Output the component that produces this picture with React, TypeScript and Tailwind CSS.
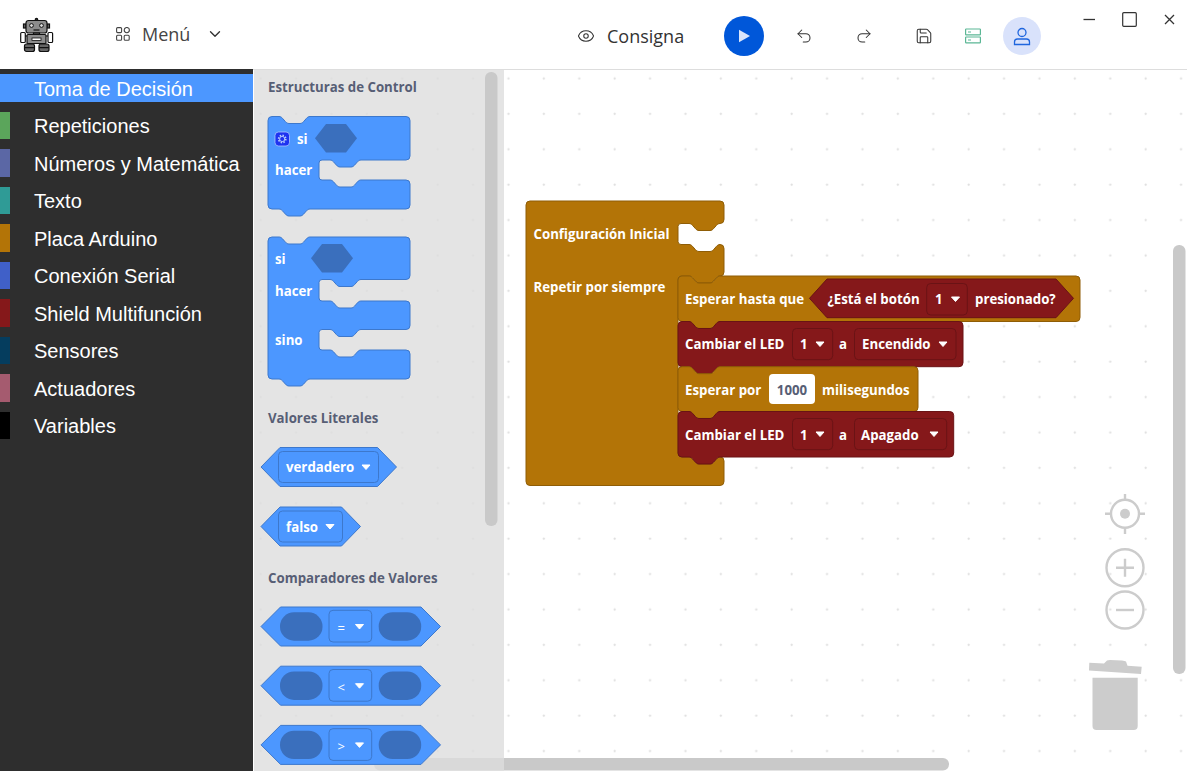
import { Eye, ChevronDown, Undo2, Redo2, Save } from "lucide-react";

const BLUE = { f: "#4c97ff", s: "#3d78cc", d: "#3a6fbd" };
const GOLD = { f: "#b37407", s: "#8f5d06" };
const RED = { f: "#85181a", s: "#6a1315" };

const notchR = "c1.5 0 2.5 .7 3.5 1.8 l3 3.4 c1 1.1 2 1.8 3.5 1.8 h11 c1.5 0 2.5 -.7 3.5 -1.8 l3 -3.4 c1 -1.1 2 -1.8 3.5 -1.8";
const notchL = "c-1.5 0 -2.5 .7 -3.5 1.8 l-3 3.4 c-1 1.1 -2 1.8 -3.5 1.8 h-11 c-1.5 0 -2.5 -.7 -3.5 -1.8 l-3 -3.4 c-1 -1.1 -2 -1.8 -3.5 -1.8";
const NW = 31;
const O = 11;
const R = 4;

type Gap = [number, number];
function blockPath(o: {
  x: number; y: number; right: number; bottom: number; top?: boolean; foot?: boolean; inner?: number; gaps?: Gap[];
}) {
  const { x, y, right, bottom, top = true, foot = true, inner = 0, gaps = [] } = o;
  let d = `M${x} ${y + R} q0 -${R} ${R} -${R} `;
  if (top) d += `H${x + O} ${notchR} `;
  d += `H${right - R} q${R} 0 ${R} ${R} `;
  for (const [a, b] of gaps) {
    d += `V${a - R} q0 ${R} -${R} ${R} H${inner + O + NW} ${notchL} H${inner + 3} q-3 0 -3 3 V${b - 3} q0 3 3 3 H${inner + O} ${notchR} H${right - R} q${R} 0 ${R} ${R} `;
  }
  d += `V${bottom - R} q0 ${R} -${R} ${R} `;
  if (foot) d += `H${x + O + NW} ${notchL} `;
  d += `H${x + R} q-${R} 0 -${R} -${R} Z`;
  return d;
}

function Block({ c, ...o }: { c: { f: string; s: string } } & Parameters<typeof blockPath>[0]) {
  return <path d={blockPath(o)} fill={c.f} stroke={c.s} strokeWidth={1} />;
}

function Hex({ x, y, w, h, tab, fill, stroke }: { x: number; y: number; w: number; h: number; tab: number; fill: string; stroke?: string }) {
  const m = y + h / 2;
  return (
    <path
      d={`M${x} ${m} L${x + tab} ${y} H${x + w - tab} L${x + w} ${m} L${x + w - tab} ${y + h} H${x + tab} Z`}
      fill={fill}
      stroke={stroke}
      strokeWidth={stroke ? 1 : 0}
      strokeLinejoin="round"
    />
  );
}

function Lbl({ x, y, children, fill = "#ffffff" }: { x: number; y: number; children: React.ReactNode; fill?: string }) {
  return (
    <text x={x} y={y} fill={fill} fontSize={13.25} fontWeight={700}>
      {children}
    </text>
  );
}

function Caret({ x, y }: { x: number; y: number }) {
  return <path d={`M${x + 0.5} ${y + 0.5} h8 l-4 4.5 Z`} fill="#ffffff" stroke="#ffffff" strokeWidth={1} strokeLinejoin="round" />;
}

function Drop({ x, y, w, h, label, tx, cx, cy, s, ty }: { x: number; y: number; w: number; h: number; label: string; tx: number; cx: number; cy: number; s: string; ty: number }) {
  return (
    <g>
      <rect x={x} y={y} width={w} height={h} rx={4} fill="none" stroke={s} strokeWidth={1} />
      <Lbl x={tx} y={ty}>{label}</Lbl>
      <Caret x={cx} y={cy} />
    </g>
  );
}

function Gear() {
  return (
    <g>
      <rect x={275} y={132} width={14.5} height={14} rx={3.5} fill="#1e33f0" stroke="#a9c4ff" strokeWidth={0.8} />
      <circle cx={282.2} cy={139} r={3.6} fill="none" stroke="#b7cdfc" strokeWidth={1.6} strokeDasharray="1.5 1.3" />
      <circle cx={282.2} cy={139} r={2.6} fill="none" stroke="#b7cdfc" strokeWidth={1} />
    </g>
  );
}

function Comparator({ y, op }: { y: number; op: string }) {
  return (
    <g>
      <Hex x={261} y={y} w={179.5} h={39} tab={19.5} fill={BLUE.f} stroke={BLUE.s} />
      <rect x={280} y={y + 5.3} width={42.5} height={28.4} rx={14} fill={BLUE.d} />
      <rect x={378.7} y={y + 5.3} width={42.5} height={28.4} rx={14} fill={BLUE.d} />
      <rect x={329} y={y + 3.3} width={42.7} height={31.7} rx={4} fill="none" stroke={BLUE.s} />
      <text x={337.5} y={y + 26} fill="#fff" fontSize={13} fontWeight={400}>{op}</text>
      <Caret x={355} y={y + 17} />
    </g>
  );
}

function Flyout() {
  return (
    <div className="absolute left-px top-0 bottom-0 w-[250px] bg-[#dddddd]/80">
      <svg className="absolute inset-0 font-['Open_Sans',sans-serif]" width="250" height="701" viewBox="254 70 250 701">
        <rect x={485} y={72} width={12.5} height={454} rx={6} fill="#c9c9c9" />
        <Lbl x={268} y={92} fill="#575e75">Estructuras de Control</Lbl>

        <Block c={BLUE} x={268} y={116.5} right={410} bottom={209} inner={319} gaps={[[160, 180]]} />
        <Gear />
        <Lbl x={297} y={144}>si</Lbl>
        <Hex x={315} y={124} w={42} h={28.4} tab={11} fill={BLUE.d} />
        <Lbl x={275} y={175}>hacer</Lbl>

        <Block c={BLUE} x={268} y={237} right={410} bottom={379} inner={319} gaps={[[279.5, 301], [329.5, 350]]} />
        <Lbl x={275} y={264}>si</Lbl>
        <Hex x={311} y={244} w={42} h={28.4} tab={11} fill={BLUE.d} />
        <Lbl x={275} y={296}>hacer</Lbl>
        <Lbl x={275} y={345}>sino</Lbl>

        <Lbl x={268} y={423} fill="#575e75">Valores Literales</Lbl>
        <Hex x={261} y={447.5} w={135.5} h={39} tab={19} fill={BLUE.f} stroke={BLUE.s} />
        <Drop x={278.5} y={451.5} w={100} h={31} label="verdadero" tx={286} ty={472} cx={361.5} cy={464.5} s={BLUE.s} />
        <Hex x={261} y={507} w={99.5} h={39} tab={19} fill={BLUE.f} stroke={BLUE.s} />
        <Drop x={278.5} y={511} w={64} h={31} label="falso" tx={286} ty={532} cx={325.5} cy={524} s={BLUE.s} />

        <Lbl x={268} y={583} fill="#575e75">Comparadores de Valores</Lbl>
        <Comparator y={607} op="=" />
        <Comparator y={666.2} op="<" />
        <Comparator y={725.4} op=">" />
      </svg>
    </div>
  );
}

function Canvas() {
  const grey = "#cccccc";
  return (
    <svg className="absolute inset-0 font-['Open_Sans',sans-serif]" width="934" height="701" viewBox="253 70 934 701">
      <defs>
        <pattern id="dots" x={11.15} y={5.95} width={35.4} height={35.4} patternUnits="userSpaceOnUse">
          <path d="M0.5 1.75 H3 M1.75 0.5 V3" stroke="#dcdcdc" strokeWidth={0.9} />
        </pattern>
      </defs>
      <rect x={253} y={70} width={934} height={701} fill="url(#dots)" />

      {/* program */}
      <Block c={GOLD} x={526} y={201} right={724} bottom={485.5} top={false} foot={false} inner={678} gaps={[[223.5, 244.5], [276, 457]]} />
      <Lbl x={533.5} y={239}>Configuración Inicial</Lbl>
      <Lbl x={533.5} y={292}>Repetir por siempre</Lbl>

      <Block c={GOLD} x={678} y={276} right={1080} bottom={321.5} foot />
      <Lbl x={685} y={304}>Esperar hasta que</Lbl>
      <Hex x={809.5} y={279} w={264} h={38.7} tab={17.5} fill={RED.f} stroke={RED.s} />
      <Lbl x={827.5} y={304}>¿Está el botón</Lbl>
      <Drop x={926.7} y={283.5} w={40.6} h={31.5} label="1" tx={935} ty={304} cx={951} cy={296.5} s={RED.s} />
      <Lbl x={975} y={304}>presionado?</Lbl>

      <Block c={RED} x={678} y={321.5} right={963} bottom={366.7} />
      <Lbl x={685} y={349}>Cambiar el LED</Lbl>
      <Drop x={792.5} y={328.5} w={40.2} h={31.2} label="1" tx={800} ty={349} cx={815.5} cy={341.5} s={RED.s} />
      <Lbl x={839} y={349}>a</Lbl>
      <Drop x={854.5} y={328.5} w={101.5} h={31.2} label="Encendido" tx={862} ty={349} cx={938.5} cy={341.5} s={RED.s} />

      <Block c={GOLD} x={678} y={366.7} right={918} bottom={411.5} />
      <Lbl x={685} y={395}>Esperar por</Lbl>
      <rect x={769} y={374} width={46} height={30} rx={4} fill="#ffffff" />
      <text x={792} y={395} textAnchor="middle" fill="#575e75" fontSize={13.25} fontWeight={700}>1000</text>
      <Lbl x={822} y={395}>milisegundos</Lbl>

      <Block c={RED} x={678} y={411.5} right={953.7} bottom={457} />
      <Lbl x={685} y={440}>Cambiar el LED</Lbl>
      <Drop x={792.5} y={418.5} w={40.2} h={31.2} label="1" tx={800} ty={440} cx={815.5} cy={431.5} s={RED.s} />
      <Lbl x={839} y={440}>a</Lbl>
      <Drop x={854.5} y={418.5} w={92.2} h={31.2} label="Apagado" tx={861} ty={440} cx={929.5} cy={431.5} s={RED.s} />

      {/* scrollbars */}
      <rect x={1173} y={245} width={12.5} height={429} rx={6} fill="#c9c9c9" />
      <rect x={374} y={758} width={575} height={12.5} rx={6} fill="#c9c9c9" />

      {/* controls */}
      <g fill="none" stroke={grey}>
        <circle cx={1125} cy={513.7} r={14} strokeWidth={2.4} />
        <path d="M1125 494 V500 M1125 528 V534 M1105 513.7 H1111 M1139 513.7 H1145" strokeWidth={2.4} />
        <circle cx={1125} cy={567.7} r={18.5} strokeWidth={2.4} />
        <path d="M1116 567.7 H1134 M1125 558.7 V576.7" strokeWidth={2.4} />
        <circle cx={1125} cy={610} r={18.5} strokeWidth={2.4} />
        <path d="M1116 610 H1134" strokeWidth={2.4} />
      </g>
      <circle cx={1125} cy={513.7} r={5} fill={grey} />
      <path d="M1092.5 677.7 H1137.7 V726 q0 4 -4 4 H1096.5 q-4 0 -4 -4 Z" fill={grey} />
      <path d="M1089.3 662.7 L1104 663.6 L1107 660.6 Q1108 660 1110 660 L1122 660.4 Q1125 660.6 1126 661.6 L1127.5 665.7 L1141.7 666.8 L1141 674 L1089 670.4 Z" fill={grey} />
    </svg>
  );
}

function Robot() {
  return (
    <svg width="34" height="36" viewBox="0 0 34 36" className="block">
      <g stroke="#111" strokeWidth={1.2}>
        <circle cx={16.5} cy={2.6} r={1.2} fill="#333" />
        <rect x={3.5} y={7} width={2.5} height={4} fill="#666" />
        <rect x={27} y={7} width={2.5} height={4} fill="#666" />
        <rect x={6} y={3.5} width={21} height={12.5} rx={2.5} fill="#8c8c8c" />
        <rect x={13.5} y={16} width={6} height={2} fill="#777" />
        <rect x={0.7} y={15.5} width={4.6} height={10} rx={1} fill="#fff" />
        <rect x={28} y={15.5} width={4.6} height={10} rx={1} fill="#fff" />
        <path d="M5 19 H7 M26 19 H28" />
        <rect x={7} y={17.5} width={19} height={9} rx={1} fill="#8c8c8c" />
        <rect x={12} y={21} width={9} height={2.4} fill="#fff" strokeWidth={0.8} />
        <rect x={4.5} y={27} width={10} height={7.5} rx={2} fill="#666" />
        <rect x={19} y={27} width={10} height={7.5} rx={2} fill="#666" />
        <path d="M4.5 30.7 H14.5 M19 30.7 H29" />
      </g>
      <circle cx={11.5} cy={8.5} r={1.9} fill="#ddd" stroke="#111" />
      <circle cx={21.5} cy={8.5} r={1.9} fill="#ddd" stroke="#111" />
      <path d="M13.5 13 H19.5" stroke="#111" strokeWidth={1.2} />
    </svg>
  );
}

const CATS: [string, string][] = [
  ["Toma de Decisión", "#4c97ff"],
  ["Repeticiones", "#5ba55b"],
  ["Números y Matemática", "#5b67a5"],
  ["Texto", "#2f9b96"],
  ["Placa Arduino", "#b37407"],
  ["Conexión Serial", "#4060c8"],
  ["Shield Multifunción", "#85181a"],
  ["Sensores", "#053d5e"],
  ["Actuadores", "#a55b6f"],
  ["Variables", "#000000"],
];

export default function App() {
  return (
    <div className="w-[1187px] h-[771px] overflow-hidden flex flex-col bg-white font-['Open_Sans',sans-serif]">
      <header className="h-[69px] shrink-0 flex items-center pt-[3px] text-[#333333]">
        <div className="ml-[20px] w-[34px] -mt-[3px]">
          <Robot />
        </div>
        <div className="ml-[62px] flex items-center -mt-[4px]">
          <svg width="14" height="14" viewBox="0 0 14 14" fill="none" stroke="#444" strokeWidth="1.1">
            <rect x="0.6" y="0.6" width="5" height="5" rx="1" />
            <circle cx="10.8" cy="3.1" r="2.6" />
            <rect x="0.6" y="8.2" width="5" height="5" rx="1" />
            <rect x="8.2" y="8.2" width="5" height="5" rx="1" />
          </svg>
          <span className="ml-3 w-[48px] text-[18px] leading-6 text-[#444] whitespace-nowrap">Menú</span>
          <ChevronDown className="ml-[16px]" size={18} strokeWidth={1.8} color="#333" />
        </div>
        <Eye className="ml-[353px]" size={18} strokeWidth={1.4} color="#333" />
        <span className="ml-[12px] w-[77px] text-[18px] leading-6 text-[#333] whitespace-nowrap">Consigna</span>
        <button className="ml-[40px] w-10 h-10 rounded-full bg-[#0057d9] flex items-center justify-center">
          <svg width="13" height="14" viewBox="0 0 13 14"><path d="M1 .8 L12 7 L1 13.2 Z" fill="#dbe6fb" /></svg>
        </button>
        <Undo2 className="ml-[31px]" size={18} strokeWidth={1.4} color="#333" />
        <Redo2 className="ml-[42px]" size={18} strokeWidth={1.4} color="#333" />
        <Save className="ml-[42px]" size={18} strokeWidth={1.4} color="#333" />
        <svg className="ml-[31px]" width="18" height="16" viewBox="0 0 18 16" fill="none" stroke="#5bb795" strokeWidth="1.2">
          <rect x="1.6" y="1" width="14.8" height="5.8" rx=".6" />
          <rect x="1.6" y="9" width="14.8" height="5.8" rx=".6" />
          <path d="M4 4 H7 M4 12 H7" />
        </svg>
        <div className="ml-[21px] w-[38px] h-[38px] rounded-full bg-[#d9e2fb] flex items-center justify-center">
          <svg width="18" height="19" viewBox="0 0 18 19" fill="none" stroke="#1f66de" strokeWidth="1.3">
            <circle cx="9" cy="5.5" r="4" />
            <path d="M1.5 15 q0 -3 3 -3 h9 q3 0 3 3 v2.5 h-15 Z" />
          </svg>
        </div>
        <div className="ml-[41px] self-start mt-[9px] flex items-center">
          <svg width="15" height="15" viewBox="0 0 15 15"><path d="M1.5 7.5 H13" stroke="#333" strokeWidth="1.3" /></svg>
          <svg className="ml-[25px]" width="15" height="15" viewBox="0 0 15 15" fill="none"><rect x=".7" y=".7" width="13.6" height="13.6" rx="1" stroke="#333" strokeWidth="1.2" /></svg>
          <svg className="ml-[25px]" width="15" height="15" viewBox="0 0 15 15"><path d="M3 3 L12 12 M12 3 L3 12" stroke="#333" strokeWidth="1.3" /></svg>
        </div>
      </header>
      <div className="flex-1 flex min-h-0">
        <aside className="w-[253px] shrink-0 bg-[#2e2e2e] pt-[5px] flex flex-col gap-[10px] font-['Liberation_Sans',Arial,sans-serif]">
          {CATS.map(([name, color], i) => (
            <div key={name} className="h-[27.5px] flex items-center" style={i === 0 ? { background: color } : undefined}>
              <span className="w-[10px] h-full" style={{ background: color }} />
              <span className="ml-6 pt-[2px] text-[20px] leading-7 text-white whitespace-nowrap">{name}</span>
            </div>
          ))}
        </aside>
        <main className="relative flex-1 border-t border-[#dddddd]">
          <Canvas />
          <Flyout />
        </main>
      </div>
    </div>
  );
}
